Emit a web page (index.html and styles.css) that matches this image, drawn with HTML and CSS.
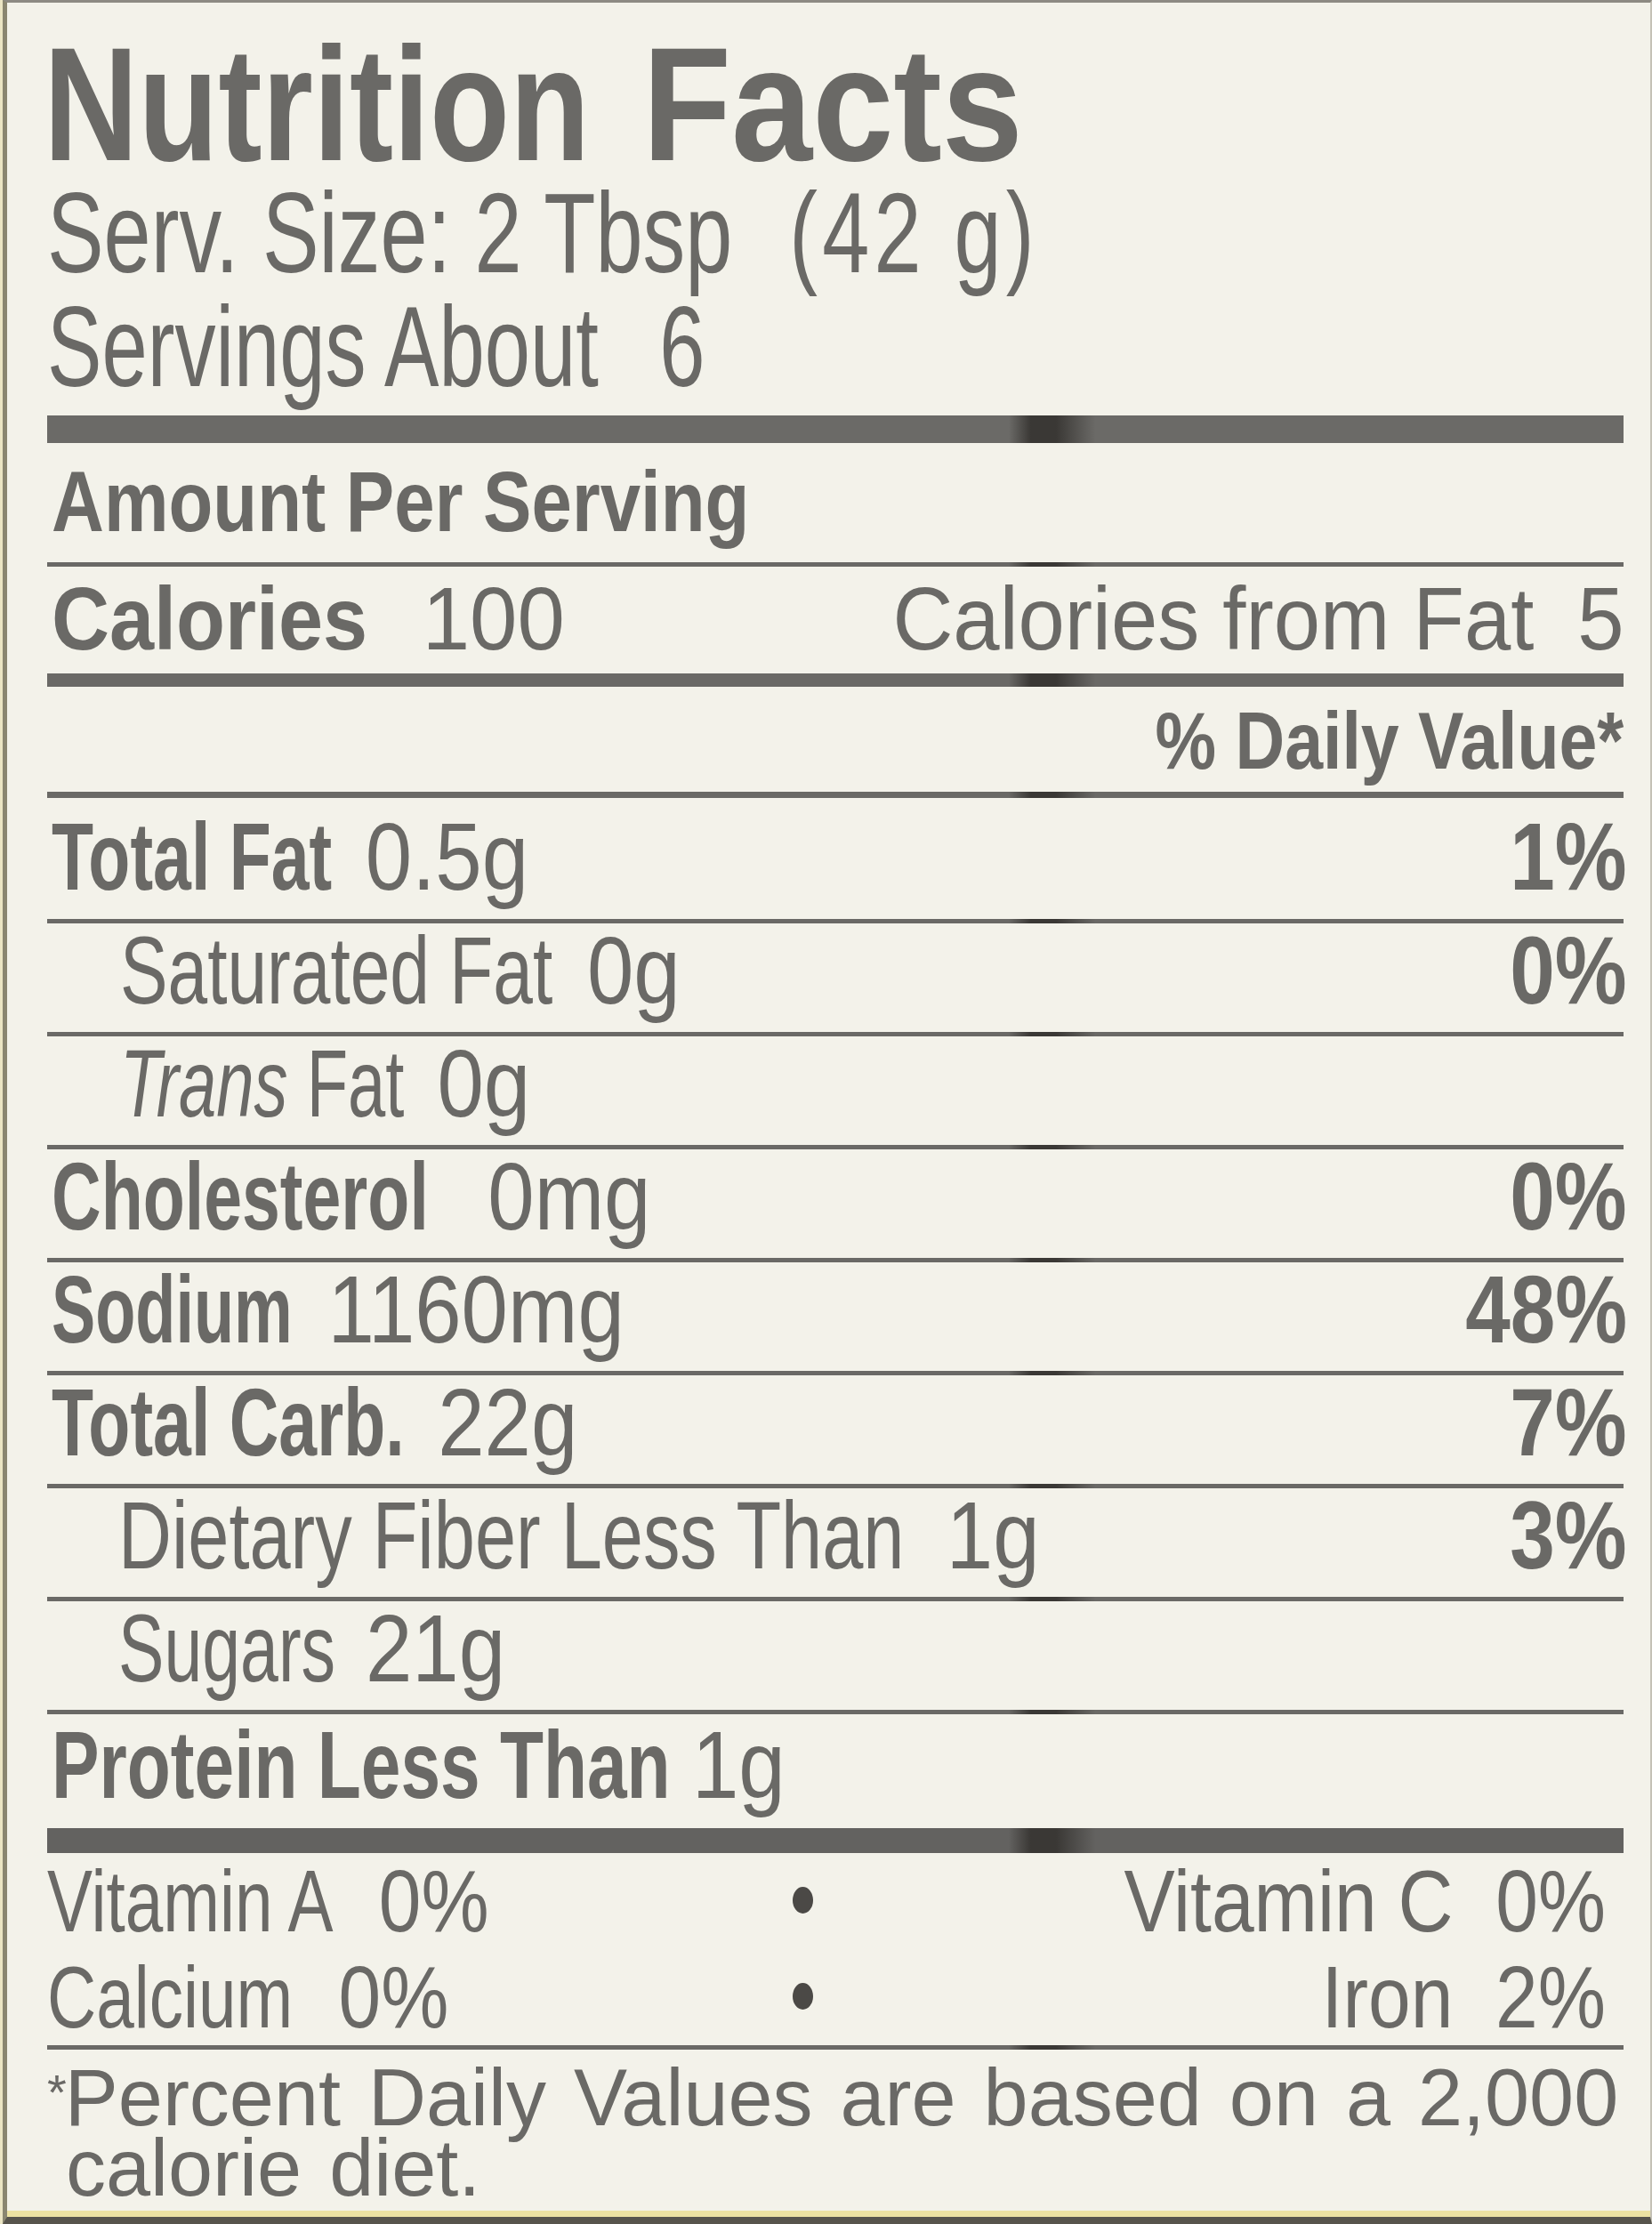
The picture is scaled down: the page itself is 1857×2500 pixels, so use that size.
FILE: index.html
```html
<!DOCTYPE html>
<html lang="en">
<head>
<meta charset="utf-8">
<title>Nutrition Facts</title>
<link rel="stylesheet" href="styles.css">
</head>
<body>
<div class="label">
  <div class="title"><span class="sx w1">Nutrition</span> <span class="sx w2">Facts</span></div>
  <div class="serv"><span class="sx">Serv. Size: 2 Tbsp<span class="paren">(42 g)</span></span></div>
  <div class="serv2"><span class="sx">Servings About<span class="six">6</span></span></div>
  <div class="rule thick"></div>

  <div class="row amount"><span class="sx">Amount Per Serving</span></div>
  <div class="rule"></div>

  <div class="row cal">
    <span class="sx lbl"><b>Calories</b><span class="amt">100</span></span>
    <span class="sx r calfat">Calories from Fat<span class="five">5</span></span>
  </div>
  <div class="rule med"></div>

  <div class="row dvh"><b class="sx r">% Daily Value*</b></div>
  <div class="rule dv"></div>

  <div class="row nut first">
    <span class="sx lbl"><b>Total Fat</b><span class="amt">0.5g</span></span>
    <b class="sx r pct">1%</b>
  </div>
  <div class="rule"></div>

  <div class="row nut sub sat">
    <span class="sx lbl">Saturated Fat<span class="amt">0g</span></span>
    <b class="sx r pct">0%</b>
  </div>
  <div class="rule"></div>

  <div class="row nut sub trans">
    <span class="sx lbl"><i>Trans</i> Fat<span class="amt">0g</span></span>
  </div>
  <div class="rule"></div>

  <div class="row nut chol">
    <span class="sx lbl"><b>Cholesterol</b><span class="amt">0mg</span></span>
    <b class="sx r pct">0%</b>
  </div>
  <div class="rule"></div>

  <div class="row nut sod">
    <span class="sx lbl"><b>Sodium</b><span class="amt">1160mg</span></span>
    <b class="sx r pct">48%</b>
  </div>
  <div class="rule"></div>

  <div class="row nut">
    <span class="sx lbl"><b>Total Carb.</b><span class="amt">22g</span></span>
    <b class="sx r pct">7%</b>
  </div>
  <div class="rule"></div>

  <div class="row nut sub fiber">
    <span class="sx lbl">Dietary Fiber Less Than<span class="amt">1g</span></span>
    <b class="sx r pct">3%</b>
  </div>
  <div class="rule"></div>

  <div class="row nut sub sugars">
    <span class="sx lbl">Sugars<span class="amt">21g</span></span>
  </div>
  <div class="rule"></div>

  <div class="row nut protein">
    <span class="sx lbl"><b>Protein Less Than</b><span class="amt">1g</span></span>
  </div>
  <div class="rule thick2"></div>

  <div class="vit">
    <span class="sx vl">Vitamin A<span class="vp">0%</span></span>
    <span class="dotc"><span class="dot"></span></span>
    <span class="sx r vr">Vitamin C  0%</span>
    <span class="sx vl">Calcium<span class="vp">0%</span></span>
    <span class="dotc"><span class="dot"></span></span>
    <span class="sx r vr">Iron  2%</span>
  </div>
  <div class="rule"></div>

  <p class="foot"><span class="ast">*</span>Percent Daily Values are based on a 2,000<br>calorie diet.</p>
</div>
</body>
</html>
```
FILE: styles.css
```css
* { box-sizing: border-box; }

html, body { margin: 0; }

body {
  background: #ebe5c4;
  font-family: "Liberation Sans", Arial, Helvetica, sans-serif;
  color: #6a6966;
}

.label {
  margin-left: 3px;
  height: 2500px;
  overflow: hidden;
  background: #f3f2ea;
  border-top: 3px solid #8d8a83;
  border-left: 5px solid #8a8670;
  border-right: 2px solid #c4c1b6;
  border-bottom: 8px solid #57544c;
  box-shadow: inset 0 -7px 0 #ece2a2;
  padding: 0 30px 0 45px;
}

/* condensed text: horizontal scale from a per-element variable */
.sx {
  display: inline-block;
  white-space: pre;
  transform: scaleX(var(--s, 1));
  transform-origin: 0 50%;
}
.sx.r { transform-origin: 100% 50%; }

b { font-weight: 700; }

/* header */
.title {
  padding-top: 32px;
  margin-left: -4px;
  font-size: 182px;
  line-height: 164px;
  font-weight: 700;
  white-space: nowrap;
}
.title .w1 { --s: .81; margin-right: -136px; }
.title .w2 { --s: .9; }

.serv, .serv2 { font-size: 128px; }
.serv { line-height: 126px; }
.serv2 { line-height: 130px; }
.serv .sx { --s: .745; }
.serv2 .sx { --s: .72; }
.paren { margin-left: 86px; letter-spacing: 7px; }
.six { margin-left: 95px; }

/* rules */
.rule {
  --rc: #6a6966;
  height: 5px;
  background: linear-gradient(90deg, var(--rc) 0, var(--rc) 61%, #3a3835 62.4%, #3a3835 64%, var(--rc) 66.5%, var(--rc) 100%);
}
.rule.thick { height: 31px; margin-top: 12px; --rc: #6b6a67; }
.rule.med { height: 15px; }
.rule.dv { height: 7px; }
.rule.thick2 { height: 28px; --rc: #636260; }

/* rows */
.row {
  display: flex;
  justify-content: space-between;
  align-items: baseline;
  padding-left: 5px;
}

.amount {
  height: 134px;
  padding-top: 16px;
  font-size: 96px;
  line-height: 100px;
  font-weight: 700;
}
.amount .sx { --s: .85; }

.amt {
  display: inline-block;
  margin-left: 52px;
  font-weight: 400;
  font-style: normal;
  transform: scaleX(calc(var(--fa, .88) / var(--s)));
  transform-origin: 0 50%;
}

.cal {
  height: 120px;
  padding-top: 8px;
  font-size: 100px;
  line-height: 100px;
}
.cal .lbl { --s: .9; --fa: .96; }
.cal .amt { margin-left: 68px; }
.calfat { --s: .94; }
.five { margin-left: 52px; }

.dvh {
  height: 118px;
  padding-top: 11px;
  font-size: 90px;
  line-height: 100px;
}
.dvh .sx { --s: .856; margin-left: auto; }

.nut {
  height: 122px;
  padding-top: 3px;
  font-size: 107px;
  line-height: 100px;
}
.nut.first { height: 136px; padding-top: 16px; }
.nut.protein { height: 128px; padding-top: 7px; }

.lbl { --s: .72; }
.pct { --s: .85; margin-right: -4px; }

.sub { padding-left: 82px; }
.sat .lbl { --s: .75; }
.trans .lbl { --s: .71; }
.fiber { padding-left: 80px; }
.fiber .lbl { --s: .775; }
.fiber .amt { margin-left: 61px; }
.sugars { padding-left: 80px; }
.sugars .amt { margin-left: 47px; }
.chol .amt { margin-left: 92px; }
.sod .lbl { --s: .69; }
.sod .amt { margin-left: 58px; }
.protein .lbl { --s: .75; }
.protein .amt { margin-left: 32px; }

/* vitamins */
.vit {
  display: grid;
  grid-template-columns: 838px 24px 1fr;
  font-size: 98px;
  line-height: 108px;
}
.vl { --s: .78; justify-self: start; }
.vp {
  display: inline-block;
  margin-left: 66px;
  transform: scaleX(1.12);
  transform-origin: 0 50%;
}
.vr { --s: .875; justify-self: end; margin-right: 20px; }
.dotc { display: block; }
.dot {
  display: inline-block;
  width: 23px;
  height: 30px;
  border-radius: 50%;
  background: #4b4946;
  vertical-align: 20px;
}

/* footnote */
.foot {
  margin: 0;
  padding: 8px 0 0 21px;
  text-indent: -21px;
  font-size: 90px;
  line-height: 79px;
  word-spacing: 6px;
  white-space: nowrap;
}
.ast {
  font-size: 56px;
  vertical-align: 18px;
  margin-right: -2px;
}
```
